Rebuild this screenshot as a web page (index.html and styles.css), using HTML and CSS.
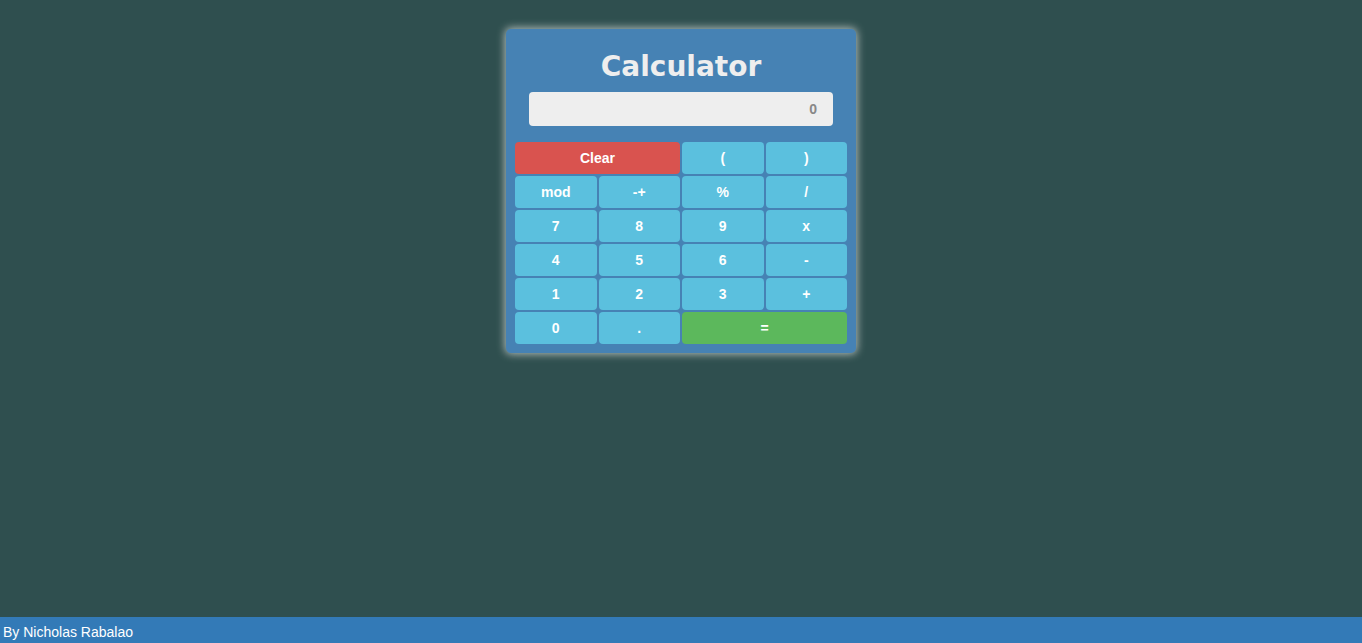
FILE: index.html
```html
<!DOCTYPE html>
<html>
<head>
<meta charset="utf-8">
<title>Calculator</title>
<link rel="stylesheet" href="styles.css">
</head>
<body>
<main class="page">
  <div class="calc">
    <h1 class="title">Calculator</h1>
    <div class="display">0</div>
    <div class="keys">
      <button class="key danger span2">Clear</button>
      <button class="key">(</button>
      <button class="key">)</button>
      <button class="key">mod</button>
      <button class="key">-+</button>
      <button class="key">%</button>
      <button class="key">/</button>
      <button class="key">7</button>
      <button class="key">8</button>
      <button class="key">9</button>
      <button class="key">x</button>
      <button class="key">4</button>
      <button class="key">5</button>
      <button class="key">6</button>
      <button class="key">-</button>
      <button class="key">1</button>
      <button class="key">2</button>
      <button class="key">3</button>
      <button class="key">+</button>
      <button class="key">0</button>
      <button class="key">.</button>
      <button class="key success span2">=</button>
    </div>
  </div>
</main>
<footer class="footer">By Nicholas Rabalao</footer>
</body>
</html>
```
FILE: styles.css
```css
html, body {
  margin: 0;
  padding: 0;
  height: 100%;
}
body {
  background: #2f4f4f;
  font-family: "Liberation Sans", Arial, sans-serif;
  font-size: 14px;
  display: flex;
  flex-direction: column;
}
.page {
  flex: 1;
  display: flex;
  justify-content: center;
  align-items: flex-start;
  padding-top: 29px;
}
.calc {
  width: 350px;
  box-sizing: border-box;
  background: #4682b4;
  border-radius: 5px;
  box-shadow: 0 0 8px 1px rgba(225, 230, 225, 0.75);
  padding: 0 9px 9px 9px;
}
.title {
  margin: 0;
  padding-top: 18px;
  height: 45px;
  box-sizing: border-box;
  text-align: center;
  font-family: "DejaVu Sans", sans-serif;
  font-weight: bold;
  font-size: 28px;
  line-height: 40px;
  color: #eeeeee;
  letter-spacing: 0;
}
.display {
  margin: 18px 14px 16px 14px;
  height: 34px;
  box-sizing: border-box;
  background: #eeeeee;
  border-radius: 4px;
  text-align: right;
  padding: 0 16px;
  line-height: 34px;
  font-weight: bold;
  font-size: 14px;
  color: #888888;
}
.keys {
  display: grid;
  grid-template-columns: repeat(4, 1fr);
  grid-auto-rows: 32px;
  gap: 2px;
}
.key {
  border: none;
  border-radius: 4px;
  background: #5bc0de;
  color: #ffffff;
  font-family: "Liberation Sans", Arial, sans-serif;
  font-weight: bold;
  font-size: 14px;
  padding: 0;
  margin: 0;
}
.span2 {
  grid-column: span 2;
}
.danger {
  background: #d9534f;
}
.success {
  background: #5cb85c;
}
.footer {
  height: 26px;
  background: #337ab7;
  color: #ffffff;
  font-size: 14px;
  line-height: 30px;
  padding-left: 3px;
}
```
